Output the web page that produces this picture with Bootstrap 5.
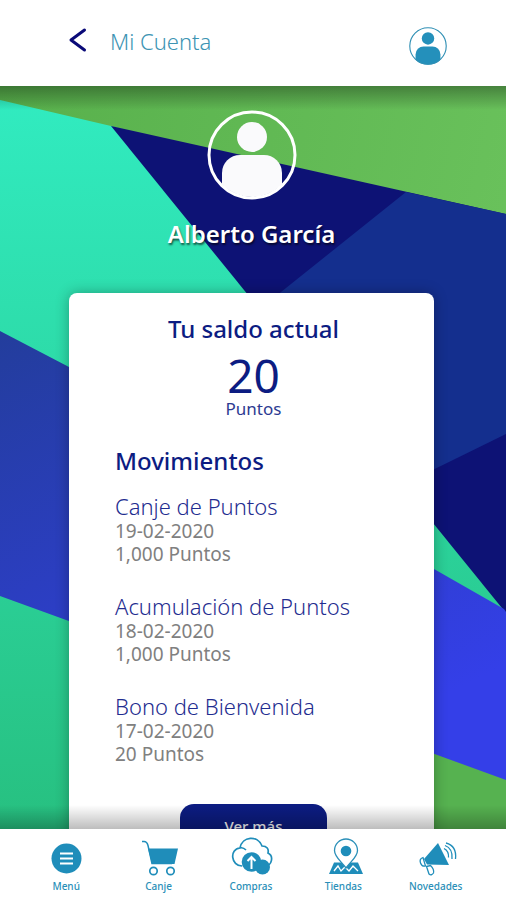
<!DOCTYPE html>
<html lang="es">
<head>
<meta charset="utf-8">
<meta name="viewport" content="width=device-width, initial-scale=1">
<title>Mi Cuenta</title>
<link href="https://cdn.jsdelivr.net/npm/bootstrap@5.3.0/dist/css/bootstrap.min.css" rel="stylesheet">
<style>
  body { font-family: "Noto Sans", "Open Sans", sans-serif; }
  .app-header { padding: 20px 58px 12px 64px; min-height: 86px; }
  .back-btn { width: 28px; height: 40px; }
  .page-title { font-size: 22px; line-height: 42px; font-weight: 300; color: #3d94b3; margin-left: 18px; }
  .profile-btn { margin-top: 6px; }
  .scene::before, .scene::after { content: ""; position: absolute; left: 0; right: 0; height: 24px; z-index: 2; pointer-events: none; }
  .scene::before { top: 0; background: linear-gradient(rgba(0,0,0,.32), rgba(0,0,0,0)); }
  .scene::after { bottom: 0; background: linear-gradient(rgba(0,0,0,0), rgba(0,0,0,.26)); }
  .scene-content { padding: 24px 72px 0 69px; }
  .user-name { font-size: 24px; line-height: 32px; font-weight: 600; margin: 18px 0 43px; text-shadow: 1px 2px 2px rgba(0,0,0,.6); }
  .balance-card { border-radius: 8px; padding: 20px 42px 32px 46px; box-shadow: 0 0 14px rgba(0,0,0,.3); color: #0c1c82; }
  .balance-title { font-size: 24px; line-height: 32px; font-weight: 500; }
  .balance-value { font-size: 46px; line-height: 48px; font-weight: 400; margin-top: 6px; }
  .balance-unit { font-size: 17px; line-height: 20px; color: #2c3a92; }
  .moves-title { font-size: 24px; line-height: 32px; font-weight: 500; margin: 26px 0 16px; }
  .move-item { margin-bottom: 27px; color: #808080; font-size: 19px; line-height: 23px; }
  .move-name { font-size: 22px; line-height: 27px; font-weight: 300; color: #1f2d90; }
  .more-btn { width: 147px; height: 44px; border-radius: 14px; background: #0c1c82; color: #fff; font-size: 15px; font-weight: 500; margin-top: 38px; }
  .tab-bar { padding: 8px 24px 7px 20px; }
  .tab-bar a { color: #2a8fb8; font-size: 10px; line-height: 14px; font-weight: 500; }
</style>
<script src="https://cdn.jsdelivr.net/npm/bootstrap@5.3.0/dist/js/bootstrap.bundle.min.js" defer></script>
</head>
<body class="vh-100 d-flex flex-column overflow-hidden bg-white">

<header class="app-header d-flex align-items-start">
  <button type="button" class="back-btn btn p-0 border-0 d-flex align-items-center justify-content-center" aria-label="Volver">
    <svg width="20" height="28" viewBox="0 0 20 28" fill="none" stroke="#0a0a78" stroke-width="3" stroke-linecap="round" stroke-linejoin="round"><path d="M16.500 4 3 14 16.500 24"/></svg>
  </button>
  <h1 class="page-title mb-0">Mi Cuenta</h1>
  <button type="button" class="profile-btn btn p-0 border-0 ms-auto d-flex" aria-label="Perfil">
    <svg width="40" height="40" viewBox="0 0 90 90"><defs><clipPath id="ring"><circle cx="45" cy="45" r="42"/></clipPath></defs>
      <g fill="#2490bb"><circle cx="45" cy="28" r="14"/><path clip-path="url(#ring)" d="M17 90V64a18 18 0 0 1 18-18h20a18 18 0 0 1 18 18v26z"/></g>
      <circle cx="45" cy="45" r="41" fill="none" stroke="#2f8fb4" stroke-width="2.500"/></svg>
  </button>
</header>

<main class="scene position-relative flex-grow-1 overflow-hidden">
  <svg class="position-absolute top-0 start-0 w-100 h-100" viewBox="0 86 506 743" preserveAspectRatio="none" aria-hidden="true">
    <defs>
      <linearGradient id="teal" gradientUnits="userSpaceOnUse" x1="0" y1="100" x2="0" y2="829"><stop offset="0" stop-color="#31ebc0"/><stop offset="1" stop-color="#27c080"/></linearGradient>
      <linearGradient id="royal" gradientUnits="userSpaceOnUse" x1="0" y1="331" x2="220" y2="800"><stop offset="0" stop-color="#233d9c"/><stop offset="1" stop-color="#343fe8"/></linearGradient>
      <linearGradient id="leaf" gradientUnits="userSpaceOnUse" x1="0" y1="86" x2="506" y2="200"><stop offset="0" stop-color="#58b04c"/><stop offset="1" stop-color="#69c15b"/></linearGradient>
    </defs>
    <path fill="url(#leaf)" d="M0 86h506v140H0z"/>
    <path fill="url(#teal)" d="M0 100 111 126 200 150 506 560V829H0z"/>
    <path fill="#0d1275" d="M111 126 506 214V613z"/>
    <path fill="#142f8e" d="M406 192 506 214V434L396 488 256 312z"/>
    <path fill="#56b250" d="M250 680 506 770V829H250z"/>
    <path fill="url(#royal)" d="M0 331 69 367 434 569 504 609 506 612V780L0 596z"/>
  </svg>
  <div class="scene-content position-relative">
    <svg class="d-block mx-auto" width="90" height="90" viewBox="0 0 90 90" role="img" aria-label="Avatar">
      <g fill="#fafafc"><circle cx="45" cy="27" r="15"/><path clip-path="url(#ring)" d="M15 90V63a18 18 0 0 1 18-18h24a18 18 0 0 1 18 18v27z"/></g>
      <circle cx="45" cy="45" r="43" fill="none" stroke="#fff" stroke-width="3"/>
    </svg>
    <h2 class="user-name text-white text-center">Alberto García</h2>

    <section class="balance-card bg-white">
      <div class="text-center">
        <h3 class="balance-title mb-0">Tu saldo actual</h3>
        <div class="balance-value">20</div>
        <div class="balance-unit">Puntos</div>
      </div>
      <h3 class="moves-title">Movimientos</h3>
      <ul class="list-unstyled mb-0">
        <li class="move-item"><h4 class="move-name mb-0">Canje de Puntos</h4><div>19-02-2020</div><div>1,000 Puntos</div></li>
        <li class="move-item"><h4 class="move-name mb-0">Acumulación de Puntos</h4><div>18-02-2020</div><div>1,000 Puntos</div></li>
        <li class="move-item"><h4 class="move-name mb-0">Bono de Bienvenida</h4><div>17-02-2020</div><div>20 Puntos</div></li>
      </ul>
      <button type="button" class="more-btn btn border-0 d-block mx-auto">Ver más</button>
    </section>
  </div>
</main>

<nav class="tab-bar bg-white" aria-label="Principal">
  <ul class="list-unstyled row row-cols-5 g-0 mb-0 text-center">
    <li class="col"><a class="text-decoration-none d-flex flex-column align-items-center" href="#">
      <svg width="44" height="42" viewBox="0 0 44 42"><circle cx="22.500" cy="21.500" r="15" fill="#1f8dba"/><path d="M16 16.500h13M16 21.500h13M16 26.500h13" stroke="#fff" stroke-width="2"/></svg>Menú</a></li>
    <li class="col"><a class="text-decoration-none d-flex flex-column align-items-center" href="#">
      <svg width="44" height="42" viewBox="0 0 44 42" fill="none" stroke="#1f8dba"><path d="M5 4.500h2q3 0 4 4l4 18h20" stroke-width="1.500"/><path d="M11 11.500H41L37.500 27H15z" fill="#1f8dba" stroke="none"/><circle cx="16.500" cy="34" r="3.700" stroke-width="1.700"/><circle cx="33.500" cy="34" r="3.700" stroke-width="1.700"/></svg>Canje</a></li>
    <li class="col"><a class="text-decoration-none d-flex flex-column align-items-center" href="#">
      <svg width="44" height="42" viewBox="0 0 44 42"><g transform="translate(1 0)"><path d="M12 29C1 29-1 12 10 11 12-1 28-2 32 9c5 0 7 3 6 7 6 3 4 13-3 13M10 11q3-1 6 2" fill="none" stroke="#1f8dba" stroke-width="1.700"/><circle cx="32.500" cy="30" r="7.500" fill="#1f8dba"/><circle cx="21.500" cy="25" r="9.800" fill="#1f8dba"/><path d="M21.500 32V20M17.500 24l4-4 4 4" fill="none" stroke="#fff" stroke-width="2"/></g></svg>Compras</a></li>
    <li class="col"><a class="text-decoration-none d-flex flex-column align-items-center" href="#">
      <svg width="44" height="42" viewBox="0 0 44 42"><g transform="translate(3 0)"><path d="M10 25.500h24L39 37H5z" fill="#1f8dba"/><path d="M10 34l4-5 3 5 4-4 4 4 4-5 5 5" fill="none" stroke="#fff" stroke-width="1.300"/><path d="M22 31C17 24 10.500 20 10.500 13.500a11.500 11.500 0 0 1 23 0C33.500 20 27 24 22 31z" fill="#fff" stroke="#2a8fb8" stroke-width="1.300"/><circle cx="22" cy="14" r="5.300" fill="#1f8dba"/></g></svg>Tiendas</a></li>
    <li class="col"><a class="text-decoration-none d-flex flex-column align-items-center" href="#">
      <svg width="44" height="42" viewBox="0 0 44 42"><path d="M24 6 35 28 13 27.500 10 22z" fill="#1f8dba"/><g fill="none" stroke="#1f8dba" stroke-width="1.300"><path d="M9 20.500q-4 1.500-2.500 5.500t5 3z"/><path d="M12.500 29.500l4-1q4 4 3 7.500-2 3-4.500 1z"/><path d="M30 11.500q5 2.500 4.500 9"/><path d="M31 8.500q8 3 7 13.500"/><path d="M32 6q11 3 9.500 16"/></g></svg>Novedades</a></li>
  </ul>
</nav>
</body>
</html>
